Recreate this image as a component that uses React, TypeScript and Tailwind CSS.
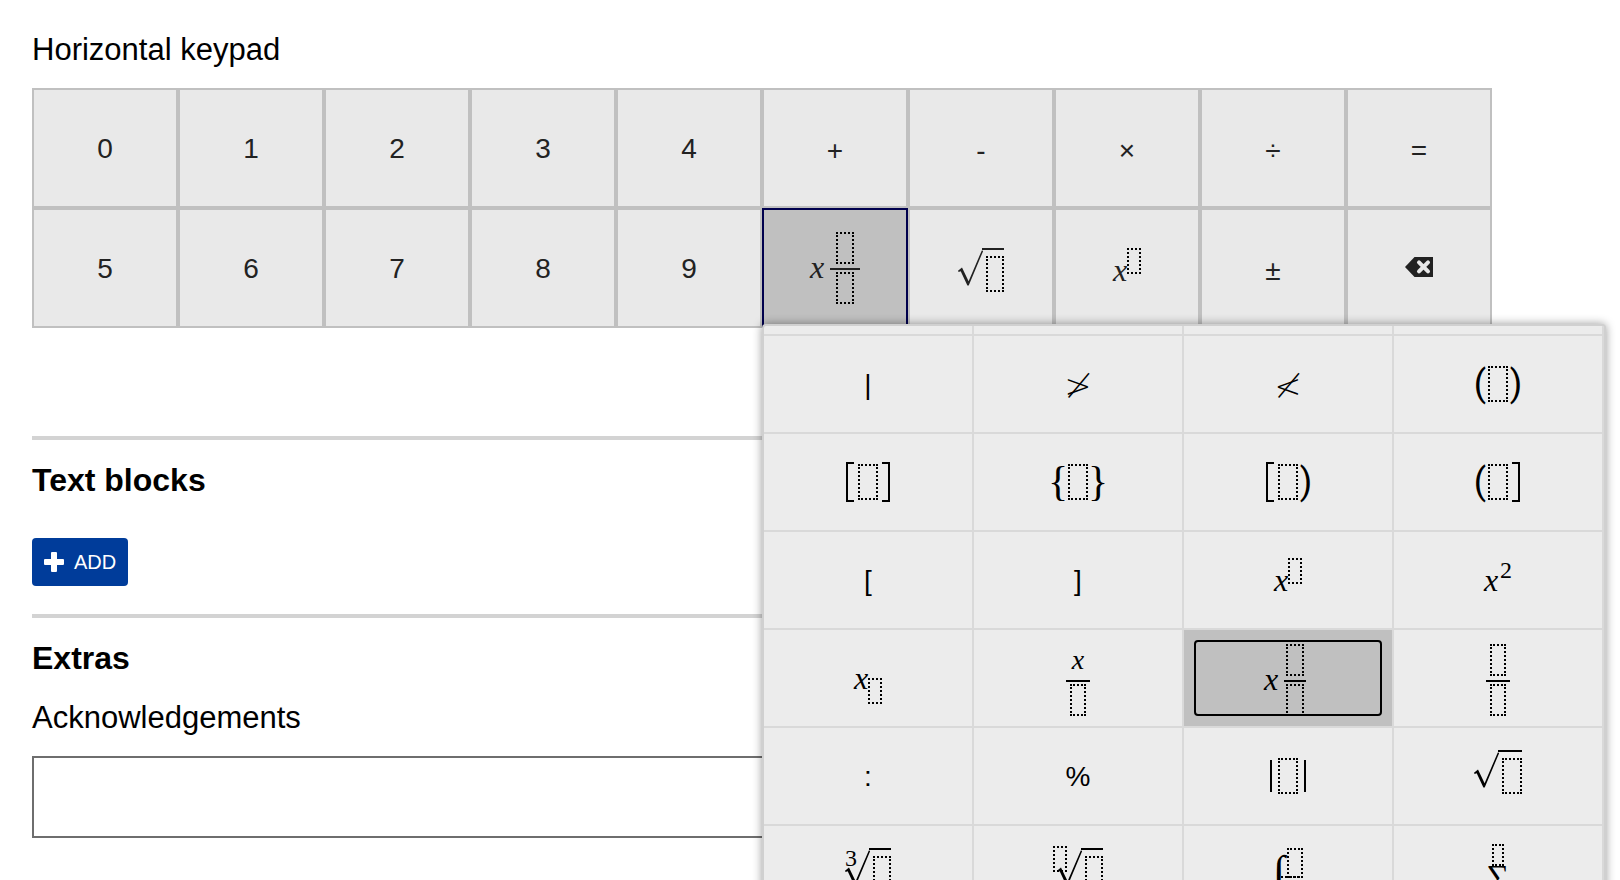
import clsx from "clsx";
import type { ReactNode } from "react";

function Slot({ className }: { className: string }) {
  return (
    <span
      className={clsx(
        "block shrink-0 border-2 border-dotted border-black",
        className
      )}
    />
  );
}

function Variable({ className }: { className?: string }) {
  return (
    <i
      className={clsx(
        "font-['Liberation_Serif',serif] text-[32px] leading-none",
        className
      )}
    >
      x
    </i>
  );
}

function Fraction({
  top,
  slot = "w-4 h-8",
  bar = "w-6",
}: {
  top?: ReactNode;
  slot?: string;
  bar?: string;
}) {
  return (
    <span className="flex flex-col items-center">
      {top ?? <Slot className={slot} />}
      <span className={clsx("mt-1 mb-0.5 h-0.5 bg-current", bar)} />
      <Slot className={slot} />
    </span>
  );
}

function Root({
  index,
  height = "h-[52px]",
  slot = "w-[18px] h-9",
}: {
  index?: ReactNode;
  height?: string;
  slot?: string;
}) {
  return (
    <span className={clsx("relative flex items-start", height)}>
      {index && <span className="absolute -top-0.5 left-0">{index}</span>}
      <svg width="25" height="40" viewBox="0 0 25 40" fill="currentColor">
        <path d="M0 22.8 4 19.6 10.6 33.2 23.8 2.4 25.2 2.9 10.7 37.6H9.4L2.7 23.2 .6 24Z" />
      </svg>
      <span className="-ml-px border-t-2 border-current pt-1.5 pl-1">
        <Slot className={slot} />
      </span>
    </span>
  );
}

function Power({ height = "h-11" }: { height?: string }) {
  return (
    <span className={clsx("flex items-start", height)}>
      <Variable className="pt-1.5" />
      <Slot className="h-[26px] w-3.5" />
    </span>
  );
}

function Bracket({ side }: { side: "left" | "right" }) {
  return (
    <span
      className={clsx(
        "h-10 w-2 border-y-2 border-black",
        side === "left" ? "border-l-2" : "border-r-2"
      )}
    />
  );
}

function Paren({ children }: { children: string }) {
  return (
    <span className="flex w-2 justify-center font-['Roboto',sans-serif] text-4xl leading-9">
      {children}
    </span>
  );
}

function Brace({ children }: { children: string }) {
  return (
    <span className="flex w-3 justify-center pb-0.5 font-['Liberation_Serif',serif] text-[42px] leading-none">
      {children}
    </span>
  );
}

function Fenced({ left, right }: { left: ReactNode; right: ReactNode }) {
  return (
    <span className="flex items-center gap-1">
      {left}
      <Slot className="h-9 w-5" />
      {right}
    </span>
  );
}

function Symbol({ children }: { children: string }) {
  return <span className="pt-1.5">{children}</span>;
}

function Relation({ children }: { children: string }) {
  return (
    <span className="pt-1 font-['DejaVu_Sans',sans-serif] text-[32px] font-extralight">
      {children}
    </span>
  );
}

function BackspaceIcon() {
  return (
    <svg width="28" height="20" viewBox="0 0 28 20" className="-mt-0.5">
      <path d="M0 10 9.5 0H28V20H9.5Z" fill="#222222" />
      <path
        d="M14 5.3 23 14.3M23 5.3 14 14.3"
        stroke="#e9e9e9"
        strokeWidth="4"
        strokeLinecap="round"
      />
    </svg>
  );
}

const keys: { label: string; face: ReactNode; active?: boolean }[] = [
  { label: "0", face: "0" },
  { label: "1", face: "1" },
  { label: "2", face: "2" },
  { label: "3", face: "3" },
  { label: "4", face: "4" },
  { label: "plus", face: <Symbol>+</Symbol> },
  { label: "minus", face: <Symbol>-</Symbol> },
  { label: "times", face: <Symbol>×</Symbol> },
  { label: "divide", face: <Symbol>÷</Symbol> },
  { label: "equals", face: <Symbol>=</Symbol> },
  { label: "5", face: "5" },
  { label: "6", face: "6" },
  { label: "7", face: "7" },
  { label: "8", face: "8" },
  { label: "9", face: "9" },
  {
    label: "mixed fraction",
    active: true,
    face: (
      <span className="flex items-center gap-1.5">
        <Variable className="pb-0.5" />
        <Fraction slot="w-[18px] h-8" bar="w-[30px]" />
      </span>
    ),
  },
  { label: "square root", face: <Root height="h-10" /> },
  { label: "power", face: <Power height="h-10" /> },
  { label: "plus or minus", face: <Symbol>±</Symbol> },
  { label: "backspace", face: <BackspaceIcon /> },
];

const options: { label: string; face: ReactNode; selected?: boolean }[] = [
  { label: "vertical bar", face: "|" },
  { label: "not greater than", face: <Relation>≯</Relation> },
  { label: "not less than", face: <Relation>≮</Relation> },
  {
    label: "parentheses",
    face: <Fenced left={<Paren>(</Paren>} right={<Paren>)</Paren>} />,
  },
  {
    label: "square brackets",
    face: (
      <Fenced left={<Bracket side="left" />} right={<Bracket side="right" />} />
    ),
  },
  {
    label: "curly brackets",
    face: <Fenced left={<Brace>{"{"}</Brace>} right={<Brace>{"}"}</Brace>} />,
  },
  {
    label: "closed open interval",
    face: <Fenced left={<Bracket side="left" />} right={<Paren>)</Paren>} />,
  },
  {
    label: "open closed interval",
    face: <Fenced left={<Paren>(</Paren>} right={<Bracket side="right" />} />,
  },
  { label: "left bracket", face: "[" },
  { label: "right bracket", face: "]" },
  { label: "power", face: <Power /> },
  {
    label: "squared",
    face: (
      <span className="flex h-11 items-start gap-0.5 font-['Liberation_Serif',serif]">
        <Variable className="pt-1.5" />
        <span className="text-2xl leading-none">2</span>
      </span>
    ),
  },
  {
    label: "subscript",
    face: (
      <span className="flex h-[52px] items-start">
        <Variable className="pt-2.5" />
        <Slot className="h-[26px] w-3.5 self-end" />
      </span>
    ),
  },
  {
    label: "x over blank",
    face: (
      <span className="pt-1">
        <Fraction
          top={
            <i className="h-8 font-['Liberation_Serif',serif] text-[28px] leading-8">
              x
            </i>
          }
        />
      </span>
    ),
  },
  {
    label: "mixed fraction",
    selected: true,
    face: (
      <span className="flex items-center gap-1.5 pt-1 pr-1.5">
        <Variable className="pb-0.5" />
        <Fraction slot="w-[18px] h-8" bar="w-[22px]" />
      </span>
    ),
  },
  {
    label: "fraction",
    face: (
      <span className="pt-1">
        <Fraction />
      </span>
    ),
  },
  { label: "ratio", face: ":" },
  { label: "percent", face: "%" },
  {
    label: "absolute value",
    face: (
      <span className="flex items-center gap-1.5">
        <span className="h-8 w-0.5 bg-black" />
        <Slot className="h-9 w-5" />
        <span className="h-8 w-0.5 bg-black" />
      </span>
    ),
  },
  { label: "square root", face: <Root slot="w-5 h-9" /> },
  {
    label: "cube root",
    face: (
      <Root
        index={
          <span className="block font-['Liberation_Serif',serif] text-2xl leading-none">
            3
          </span>
        }
      />
    ),
  },
  {
    label: "nth root",
    face: (
      <span className="pl-1">
        <Root index={<Slot className="-ml-1 h-[26px] w-3.5" />} />
      </span>
    ),
  },
  {
    label: "integral",
    face: (
      <span className="flex h-[52px] items-start font-['Liberation_Serif',serif]">
        <i className="text-[44px] leading-[48px]">∫</i>
        <span className="-ml-1 flex flex-col">
          <Slot className="ml-1.5 h-[30px] w-4" />
          <Slot className="-mt-0.5 h-[30px] w-[18px]" />
        </span>
      </span>
    ),
  },
  {
    label: "sum",
    face: (
      <span className="flex h-[60px] flex-col items-center font-['Liberation_Serif',serif]">
        <Slot className="h-[22px] w-3" />
        <span className="text-[32px] leading-5">∑</span>
      </span>
    ),
  },
];

function Face({ children }: { children: ReactNode }) {
  if (typeof children === "string") {
    return <span className="pt-0.5">{children}</span>;
  }

  return <>{children}</>;
}

function SymbolMenu() {
  return (
    <div className="absolute top-full left-1/2 z-10 -mt-1 w-[844px] overflow-hidden rounded border-2 border-[#d0d0d0] bg-[#ececec] shadow-[0_0_10px_rgba(0,0,0,0.4)]">
      <div className="grid grid-cols-4 text-black">
        {/* tail of the row that is scrolled out at the top */}
        {[0, 1, 2, 3].map((cell) => (
          <div key={cell} className="h-2.5 border-r-2 border-b-2 border-[#d9d9d9]" />
        ))}
        {options.map(({ label, face, selected }) => (
          <button
            key={label}
            type="button"
            aria-label={label}
            aria-pressed={!!selected}
            className={clsx(
              "flex h-[98px] items-center justify-center border-r-2 border-b-2 border-[#d9d9d9] text-[28px]",
              selected && "bg-[#c0c0c0]"
            )}
          >
            {selected ? (
              <span className="m-2.5 flex flex-1 items-center justify-center self-stretch overflow-hidden rounded border-2 border-black">
                {face}
              </span>
            ) : (
              <Face>{face}</Face>
            )}
          </button>
        ))}
      </div>
    </div>
  );
}

function Keypad() {
  return (
    <div className="relative mt-[18px] max-w-[1460px]">
      <div className="grid grid-cols-10 text-[#222222]">
        {keys.map(({ label, face, active }) => (
          <button
            key={label}
            type="button"
            aria-label={label}
            className={clsx(
              "flex h-[120px] items-center justify-center border-2 text-[28px]",
              active
                ? "border-[#00004d] bg-[#c0c0c0]"
                : "border-[#c0c0c0] bg-[#e9e9e9]"
            )}
          >
            <Face>{face}</Face>
          </button>
        ))}
      </div>
      <SymbolMenu />
    </div>
  );
}

export default function App() {
  return (
    <main className="h-screen overflow-hidden bg-white px-8 pt-[30px] font-['Liberation_Sans',Arial,sans-serif] text-[31px] leading-10 text-black">
      <p>Horizontal keypad</p>
      <Keypad />

      <hr className="mt-[108px] border-t-4 border-[#d3d3d3]" />
      <h2 className="mt-5 text-[32px] leading-10 font-bold">Text blocks</h2>
      <button
        type="button"
        className="mt-[38px] flex h-12 items-center gap-2.5 rounded bg-[#003c9a] px-3 text-xl text-white"
      >
        <svg width="20" height="20" viewBox="0 0 20 20" fill="currentColor">
          <path d="M8 0h4q1 0 1 1v6h6q1 0 1 1v4q0 1-1 1h-6v6q0 1-1 1H8q-1 0-1-1v-6H1q-1 0-1-1V8q0-1 1-1h6V1q0-1 1-1Z" />
        </svg>
        ADD
      </button>

      <hr className="mt-7 border-t-4 border-[#d3d3d3]" />
      <h2 className="mt-5 text-[32px] leading-10 font-bold">Extras</h2>
      <label htmlFor="acknowledgements" className="mt-5 block">
        Acknowledgements
      </label>
      <input
        id="acknowledgements"
        type="text"
        className="mt-[18px] block h-[82px] w-full border-2 border-[#6e6e6e] px-4"
      />
    </main>
  );
}
